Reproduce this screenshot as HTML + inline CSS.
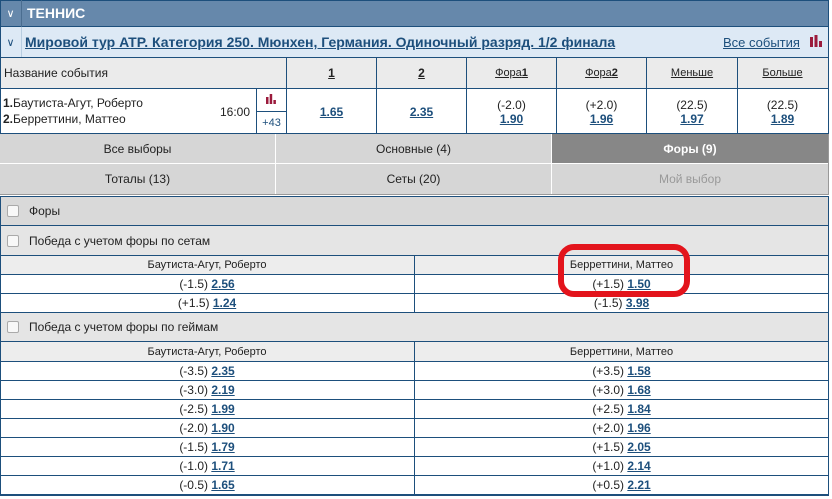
<!DOCTYPE html>
<html><head><meta charset="utf-8"><style>
*{margin:0;padding:0;box-sizing:border-box}
body{width:832px;height:499px;background:#fff;font-family:"Liberation Sans",sans-serif;font-size:12px;color:#222;position:relative;overflow:hidden}
.a{position:absolute}
.c{display:flex;align-items:center;justify-content:center;text-align:center}
.v{display:flex;flex-direction:column;align-items:center;justify-content:center;line-height:14px}
.l{color:#1d4f7c;text-decoration:underline;font-weight:bold}
.ln{position:absolute;background:#1d4f7c}
.cb{display:inline-block;width:12px;height:12px;border:1px solid #aaa;border-radius:2px;background:#f8f8f8;margin:0 10px 0 6px;vertical-align:middle}
</style></head><body>
<div class="a" style="left:0;top:0;width:829px;height:27px;background:#6688ab;border:1px solid #1d4f7c"></div>
<div class="a c" style="left:0;top:0;width:22px;height:27px;color:#fff;border-right:1px solid #4a6d90;font-size:11px">∨</div>
<div class="a" style="left:27px;top:5px;color:#fff;font-weight:bold;font-size:14px">ТЕННИС</div>
<div class="a" style="left:0;top:27px;width:829px;height:31px;background:#dde9f5;border-left:1px solid #1d4f7c;border-right:1px solid #1d4f7c"></div>
<div class="a c" style="left:0;top:27px;width:22px;height:31px;color:#1d4f7c;border-right:1px solid #b8cde0;font-size:11px">∨</div>
<div class="a l" style="left:25px;top:34px;font-size:14px">Мировой тур ATP. Категория 250. Мюнхен, Германия. Одиночный разряд. 1/2 финала</div>
<div class="a" style="left:723px;top:35px;color:#1d4f7c;text-decoration:underline;font-size:13px">Все события</div>
<svg class="a" style="left:810px;top:35px" width="12" height="13"><rect x="0" y="2" width="3" height="10" fill="#9b1b3c"/><rect x="4.5" y="0" width="3" height="12" fill="#9b1b3c"/><rect x="9" y="6" width="3" height="6" fill="#9b1b3c"/></svg>
<div class="a" style="left:0;top:57px;width:829px;height:77px;border:1px solid #1d4f7c;background:#fff"></div>
<div class="a" style="left:1px;top:58px;width:827px;height:30px;background:#ebebeb"></div>
<div class="ln" style="left:0;top:88px;width:829px;height:1px"></div>
<div class="a" style="left:4px;top:66px">Название события</div>
<div class="ln" style="left:286px;top:57px;width:1px;height:77px"></div>
<div class="ln" style="left:376px;top:57px;width:1px;height:77px"></div>
<div class="ln" style="left:466px;top:57px;width:1px;height:77px"></div>
<div class="ln" style="left:556px;top:57px;width:1px;height:77px"></div>
<div class="ln" style="left:646px;top:57px;width:1px;height:77px"></div>
<div class="ln" style="left:737px;top:57px;width:1px;height:77px"></div>
<div class="ln" style="left:256px;top:88px;width:1px;height:46px"></div>
<div class="ln" style="left:256px;top:111px;width:30px;height:1px"></div>
<div class="a c" style="left:287px;top:58px;width:89px;height:30px;font-weight:bold;text-decoration:underline">1</div>
<div class="a c" style="left:377px;top:58px;width:89px;height:30px;font-weight:bold;text-decoration:underline">2</div>
<div class="a c" style="left:467px;top:58px;width:89px;height:30px;text-decoration:underline;font-size:11px">Фора<b>1</b></div>
<div class="a c" style="left:557px;top:58px;width:89px;height:30px;text-decoration:underline;font-size:11px">Фора<b>2</b></div>
<div class="a c" style="left:647px;top:58px;width:90px;height:30px;text-decoration:underline;font-size:11px">Меньше</div>
<div class="a c" style="left:738px;top:58px;width:89px;height:30px;text-decoration:underline;font-size:11px">Больше</div>
<div class="a" style="left:3px;top:95px;line-height:16px"><b>1.</b>Баутиста-Агут, Роберто<br><b>2.</b>Берреттини, Маттео</div>
<div class="a" style="left:220px;top:105px">16:00</div>
<svg class="a" style="left:266px;top:94px" width="10" height="10"><rect x="0" y="3" width="2.5" height="7" fill="#9b1b3c"/><rect x="3.7" y="0" width="2.5" height="10" fill="#9b1b3c"/><rect x="7.4" y="6" width="2.5" height="4" fill="#9b1b3c"/></svg>
<div class="a c" style="left:257px;top:112px;width:29px;height:21px;color:#1d4f7c;font-size:11px">+43</div>
<div class="a c" style="left:287px;top:89px;width:89px;height:45px"><span class="l">1.65</span></div>
<div class="a c" style="left:377px;top:89px;width:89px;height:45px"><span class="l">2.35</span></div>
<div class="a v" style="left:467px;top:89px;width:89px;height:45px"><span>(-2.0)</span><span class="l">1.90</span></div>
<div class="a v" style="left:557px;top:89px;width:89px;height:45px"><span>(+2.0)</span><span class="l">1.96</span></div>
<div class="a v" style="left:647px;top:89px;width:90px;height:45px"><span>(22.5)</span><span class="l">1.97</span></div>
<div class="a v" style="left:738px;top:89px;width:89px;height:45px"><span>(22.5)</span><span class="l">1.89</span></div>
<div class="a" style="left:0;top:134px;width:829px;height:61px;background:#d6d6d6;border-right:1px solid #999"></div>
<div class="a c" style="left:0;top:134px;width:276px;height:30px;border-right:1px solid #fff;border-bottom:1px solid #fff">Все выборы</div>
<div class="a c" style="left:276px;top:134px;width:276px;height:30px;border-right:1px solid #fff;border-bottom:1px solid #fff">Основные (4)</div>
<div class="a c" style="left:552px;top:134px;width:276px;height:30px;background:#878787;color:#fff;font-weight:bold;border-bottom:1px solid #fff">Форы (9)</div>
<div class="a c" style="left:0;top:164px;width:276px;height:30px;border-right:1px solid #fff">Тоталы (13)</div>
<div class="a c" style="left:276px;top:164px;width:276px;height:30px;border-right:1px solid #fff">Сеты (20)</div>
<div class="a c" style="left:552px;top:164px;width:276px;height:30px;color:#999">Мой выбор</div>
<div class="a" style="left:0;top:194px;width:829px;height:3px;background:#fff;border-top:1px solid #999;border-bottom:1px solid #1d4f7c"></div>
<div class="a" style="left:0;top:196px;width:829px;height:300px;border:1px solid #1d4f7c;border-top:none;border-bottom:2px solid #1d4f7c"></div>
<div class="a" style="left:1px;top:197px;width:827px;height:29px;background:#d9d9d9;display:flex;align-items:center;border-bottom:1px solid #1d4f7c"><span class="cb"></span>Форы</div>
<div class="a" style="left:1px;top:226px;width:827px;height:30px;background:#e5e5e5;display:flex;align-items:center;border-bottom:1px solid #1d4f7c"><span class="cb"></span>Победа с учетом форы по сетам</div>
<div class="a" style="left:1px;top:256px;width:827px;height:18px;background:#ededed"></div>
<div class="ln" style="left:414px;top:256px;width:1px;height:56px"></div>
<div class="ln" style="left:0;top:274px;width:829px;height:1px"></div>
<div class="ln" style="left:0;top:293px;width:829px;height:1px"></div>
<div class="a c" style="left:0;top:256px;width:414px;height:18px;font-size:11px">Баутиста-Агут, Роберто</div>
<div class="a c" style="left:415px;top:256px;width:413px;height:18px;font-size:11px">Берреттини, Маттео</div>
<div class="a c" style="left:0;top:275px;width:414px;height:18px">(-1.5)&nbsp;<span class="l">2.56</span></div>
<div class="a c" style="left:415px;top:275px;width:413px;height:18px">(+1.5)&nbsp;<span class="l">1.50</span></div>
<div class="a c" style="left:0;top:294px;width:414px;height:18px">(+1.5)&nbsp;<span class="l">1.24</span></div>
<div class="a c" style="left:415px;top:294px;width:413px;height:18px">(-1.5)&nbsp;<span class="l">3.98</span></div>
<div class="a" style="left:1px;top:312px;width:827px;height:30px;background:#e5e5e5;display:flex;align-items:center;border-top:1px solid #1d4f7c;border-bottom:1px solid #1d4f7c"><span class="cb"></span>Победа с учетом форы по геймам</div>
<div class="a" style="left:1px;top:342px;width:827px;height:19px;background:#ededed"></div>
<div class="ln" style="left:414px;top:342px;width:1px;height:153px"></div>
<div class="a c" style="left:0;top:342px;width:414px;height:19px;font-size:11px">Баутиста-Агут, Роберто</div>
<div class="a c" style="left:415px;top:342px;width:413px;height:19px;font-size:11px">Берреттини, Маттео</div>
<div class="ln" style="left:0;top:361px;width:829px;height:1px"></div>
<div class="ln" style="left:0;top:380px;width:829px;height:1px"></div>
<div class="ln" style="left:0;top:399px;width:829px;height:1px"></div>
<div class="ln" style="left:0;top:418px;width:829px;height:1px"></div>
<div class="ln" style="left:0;top:437px;width:829px;height:1px"></div>
<div class="ln" style="left:0;top:456px;width:829px;height:1px"></div>
<div class="ln" style="left:0;top:475px;width:829px;height:1px"></div>
<div class="a c" style="left:0;top:362px;width:414px;height:18px">(-3.5)&nbsp;<span class="l">2.35</span></div>
<div class="a c" style="left:415px;top:362px;width:413px;height:18px">(+3.5)&nbsp;<span class="l">1.58</span></div>
<div class="a c" style="left:0;top:381px;width:414px;height:18px">(-3.0)&nbsp;<span class="l">2.19</span></div>
<div class="a c" style="left:415px;top:381px;width:413px;height:18px">(+3.0)&nbsp;<span class="l">1.68</span></div>
<div class="a c" style="left:0;top:400px;width:414px;height:18px">(-2.5)&nbsp;<span class="l">1.99</span></div>
<div class="a c" style="left:415px;top:400px;width:413px;height:18px">(+2.5)&nbsp;<span class="l">1.84</span></div>
<div class="a c" style="left:0;top:419px;width:414px;height:18px">(-2.0)&nbsp;<span class="l">1.90</span></div>
<div class="a c" style="left:415px;top:419px;width:413px;height:18px">(+2.0)&nbsp;<span class="l">1.96</span></div>
<div class="a c" style="left:0;top:438px;width:414px;height:18px">(-1.5)&nbsp;<span class="l">1.79</span></div>
<div class="a c" style="left:415px;top:438px;width:413px;height:18px">(+1.5)&nbsp;<span class="l">2.05</span></div>
<div class="a c" style="left:0;top:457px;width:414px;height:18px">(-1.0)&nbsp;<span class="l">1.71</span></div>
<div class="a c" style="left:415px;top:457px;width:413px;height:18px">(+1.0)&nbsp;<span class="l">2.14</span></div>
<div class="a c" style="left:0;top:476px;width:414px;height:18px">(-0.5)&nbsp;<span class="l">1.65</span></div>
<div class="a c" style="left:415px;top:476px;width:413px;height:18px">(+0.5)&nbsp;<span class="l">2.21</span></div>
<div class="a" style="left:558px;top:244px;width:132px;height:53px;border:6px solid #e3141c;border-radius:16px"></div>
</body></html>
